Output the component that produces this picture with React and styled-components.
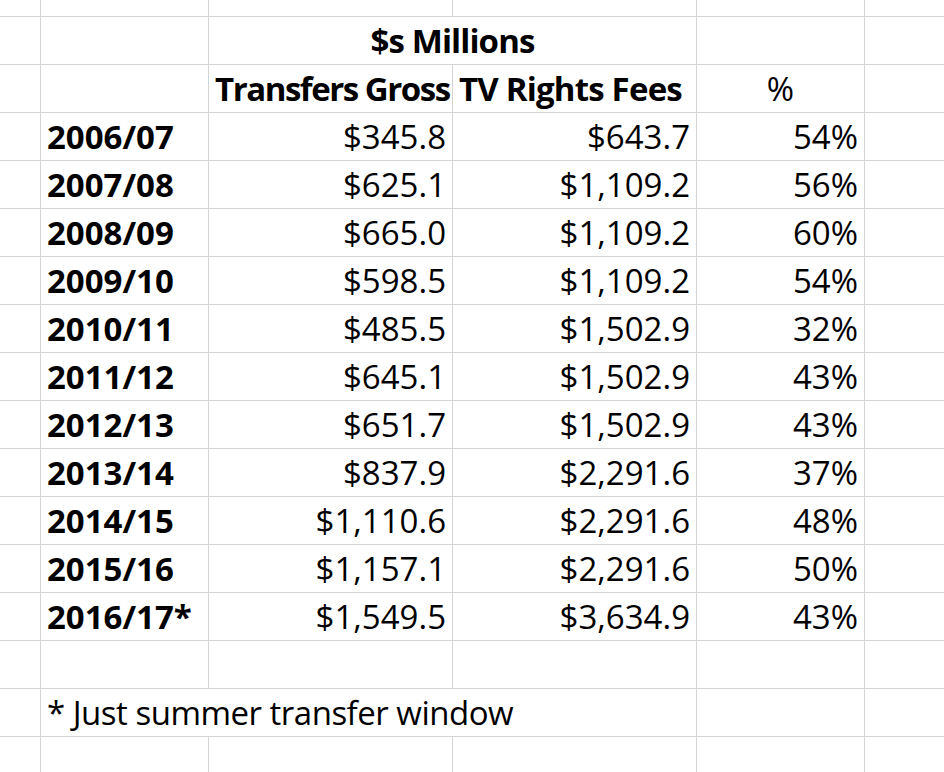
import React from "react";
import styled, { createGlobalStyle } from "styled-components";

const Global = createGlobalStyle`
  html, body { margin: 0; padding: 0; background: #ffffff; overflow: hidden; }
  #root { width: 944px; height: 772px; overflow: hidden; }
`;

const Sheet = styled.div`
  display: grid;
  grid-template-columns: 40px 167px 243px 243px 167px 1fr;
  grid-template-rows: 16px repeat(15, 47px) 40px;
  gap: 1px;
  width: 944px;
  height: 772px;
  background: #d4d4d4;
  font-family: "Open Sans", "Liberation Sans", sans-serif;
  font-size: 33px;
  color: #000000;
`;

const Cell = styled.div`
  background: #ffffff;
  display: flex;
  align-items: flex-end;
  justify-content: ${(p) =>
    p.$align === "right" ? "flex-end" : p.$align === "center" ? "center" : "flex-start"};
  padding: 0 6px 7px 6px;
  line-height: 1;
  white-space: nowrap;
  font-weight: ${(p) => (p.$bold ? 700 : 400)};
  letter-spacing: ${(p) => (p.$ls ? `${p.$ls}px` : "normal")};
  grid-column: ${(p) => (p.$span ? `span ${p.$span}` : "auto")};
  overflow: visible;
  min-width: 0;
`;

const rows = [
  ["2006/07", "$345.8", "$643.7", "54%"],
  ["2007/08", "$625.1", "$1,109.2", "56%"],
  ["2008/09", "$665.0", "$1,109.2", "60%"],
  ["2009/10", "$598.5", "$1,109.2", "54%"],
  ["2010/11", "$485.5", "$1,502.9", "32%"],
  ["2011/12", "$645.1", "$1,502.9", "43%"],
  ["2012/13", "$651.7", "$1,502.9", "43%"],
  ["2013/14", "$837.9", "$2,291.6", "37%"],
  ["2014/15", "$1,110.6", "$2,291.6", "48%"],
  ["2015/16", "$1,157.1", "$2,291.6", "50%"],
  ["2016/17*", "$1,549.5", "$3,634.9", "43%"],
];

const EmptyRow = ({ k }) =>
  [0, 1, 2, 3, 4, 5].map((i) => <Cell key={`${k}-${i}`} />);

export default function App() {
  return (
    <>
      <Global />
      <Sheet>
        <EmptyRow k="top" />

        <Cell />
        <Cell />
        <Cell $span={2} $align="center" $bold $ls={-0.9}>
          $s Millions
        </Cell>
        <Cell />
        <Cell />

        <Cell />
        <Cell />
        <Cell $bold $ls={-1.45}>
          Transfers Gross
        </Cell>
        <Cell $bold $ls={-0.8}>
          TV Rights Fees
        </Cell>
        <Cell $align="center">%</Cell>
        <Cell />

        {rows.map(([year, gross, tv, pct]) => (
          <React.Fragment key={year}>
            <Cell />
            <Cell $bold>{year}</Cell>
            <Cell $align="right">{gross}</Cell>
            <Cell $align="right">{tv}</Cell>
            <Cell $align="right">{pct}</Cell>
            <Cell />
          </React.Fragment>
        ))}

        <EmptyRow k="blank" />

        <Cell />
        <Cell $span={3} $ls={-0.5}>
          * Just summer transfer window
        </Cell>
        <Cell />
        <Cell />

        <EmptyRow k="bottom" />
      </Sheet>
    </>
  );
}
